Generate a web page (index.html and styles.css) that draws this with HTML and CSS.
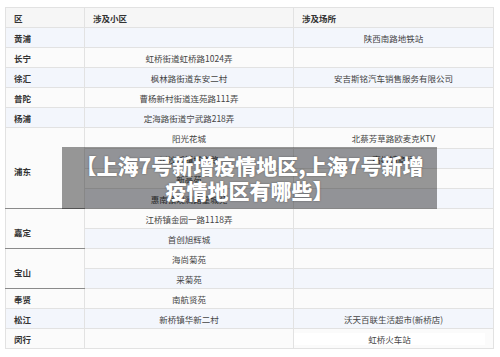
FILE: index.html
```html
<!DOCTYPE html>
<html lang="zh">
<head>
<meta charset="utf-8">
<title>上海7号新增疫情地区</title>
<link rel="stylesheet" href="styles.css">
</head>
<body>
<div class="wrap">
  <table class="grid">
    <colgroup><col class="c1"><col class="c2"><col class="c3"></colgroup>
    <tr class="head"><td class="dist">区</td><td class="hl">涉及小区</td><td class="hl">涉及场所</td></tr>
    <tr class="blue"><td class="dist">黄浦</td><td></td><td>陕西南路地铁站</td></tr>
    <tr class="wht"><td class="dist">长宁</td><td>虹桥街道虹桥路1024弄</td><td></td></tr>
    <tr class="blue"><td class="dist">徐汇</td><td>枫林路街道东安二村</td><td>安吉斯铭汽车销售服务有限公司</td></tr>
    <tr class="wht"><td class="dist">普陀</td><td>曹杨新村街道连苑路111弄</td><td></td></tr>
    <tr class="blue"><td class="dist">杨浦</td><td>定海路街道宁武路218弄</td><td></td></tr>
    <tr class="wht tall"><td class="dist grp" rowspan="4">浦东</td><td>阳光花城</td><td>北蔡芳草路欧麦克KTV</td></tr>
    <tr class="blue"><td>川沙新镇城南路</td><td>高桥镇商场</td></tr>
    <tr class="wht"><td>新高苑</td><td></td></tr>
    <tr class="blue"><td>惠南镇观澜路星城苑</td><td></td></tr>
    <tr class="wht"><td class="dist grp" rowspan="2">嘉定</td><td>江桥镇金园一路1118弄</td><td></td></tr>
    <tr class="blue"><td>首创旭辉城</td><td></td></tr>
    <tr class="wht"><td class="dist grp" rowspan="2">宝山</td><td>海尚菊苑</td><td></td></tr>
    <tr class="blue"><td>采菊苑</td><td></td></tr>
    <tr class="wht"><td class="dist">奉贤</td><td>南航贤苑</td><td></td></tr>
    <tr class="blue"><td class="dist">松江</td><td>新桥镇华新二村</td><td>沃天百联生活超市(新桥店)</td></tr>
    <tr class="wht"><td class="dist">闵行</td><td></td><td><span class="inner">虹桥火车站</span></td></tr>
  </table>
  <div class="banner">【上海7号新增疫情地区,上海7号新增<br>疫情地区有哪些】</div>
</div>
</body>
</html>
```
FILE: styles.css
```css
html, body {
  margin: 0;
  padding: 0;
  background: #ffffff;
}
body {
  font-family: "Noto Sans CJK SC", "Noto Sans", sans-serif;
  color: #444;
}
.wrap {
  position: relative;
  padding: 7px 7px 0 5px;
  width: 488px;
}
.grid {
  width: 488px;
  border-collapse: collapse;
  table-layout: fixed;
  font-size: 8.5px;
}
.c1 { width: 79px; }
.c2 { width: 209px; }
.c3 { width: 200px; }
.grid td {
  height: 19px;
  padding: 0 8px;
  border: 1px solid #e2e2e2;
  text-align: center;
  vertical-align: middle;
  line-height: 12px;
  white-space: nowrap;
  overflow: hidden;
}
.grid tr.tall td { height: 20px; }
.grid td.dist {
  text-align: left;
  font-weight: bold;
  color: #333;
  background: #fbfbfb;
}
.grid td.hl {
  text-align: left;
  font-weight: bold;
  color: #333;
}
.grid td.grp {
  border-bottom-color: #8a8a8a;
  padding-top: 6px;
}
.head td { background: #f6f6f6; }
.head td.dist { background: #f6f6f6; }
.blue td { background: #f3f6fc; }
.blue td.dist { background: #f3f6fc; }
.wht td { background: #fbfbfb; }
.inner {
  display: block;
  background: #ffffff;
  margin: 0 0 0 -8px;
  line-height: 12px;
}
.banner {
  position: absolute;
  left: 62px;
  top: 147px;
  width: 375px;
  height: 62px;
  box-sizing: border-box;
  padding-top: 6px;
  background: rgba(0, 0, 0, 0.4);
  color: #ffffff;
  font-family: "Noto Sans CJK SC", sans-serif;
  font-weight: 900;
  font-size: 21px;
  line-height: 25px;
  text-align: center;
  white-space: nowrap;
  text-shadow: 0 0 2px rgba(0, 0, 0, 0.4);
}
```
